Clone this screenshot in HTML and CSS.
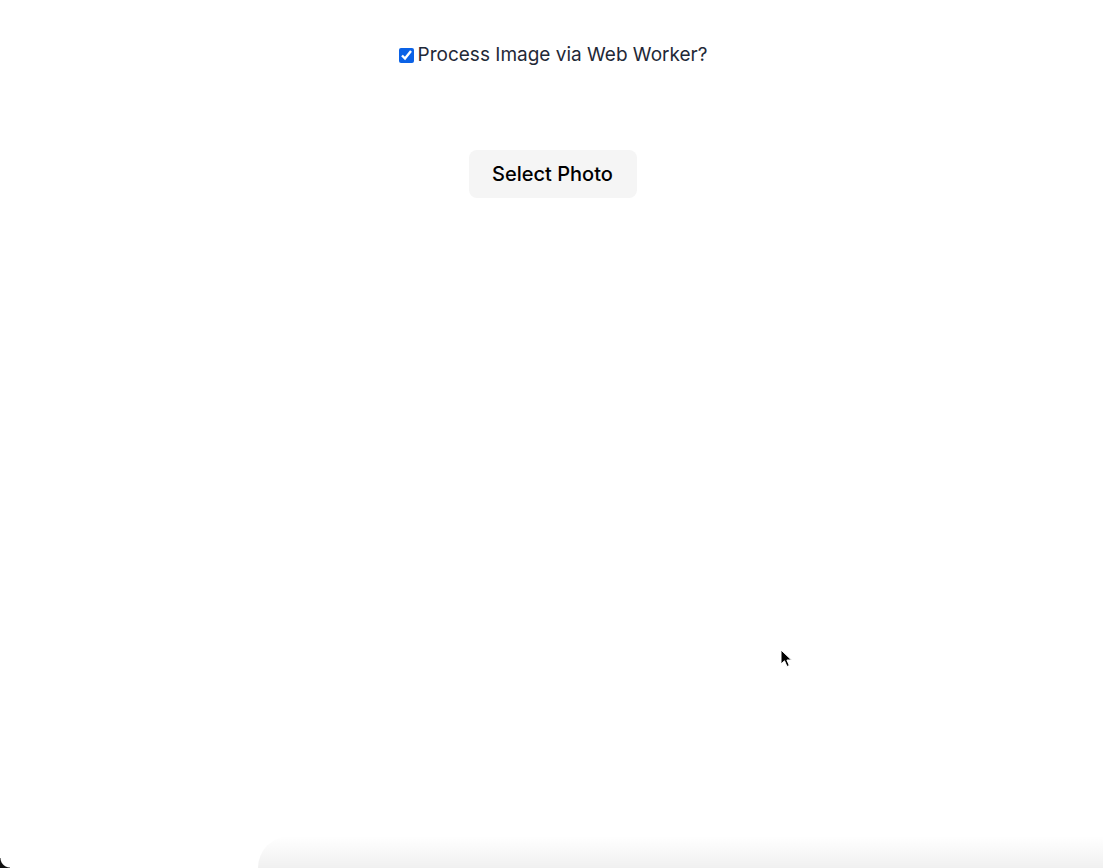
FILE: index.html
```html
<!DOCTYPE html>
<html>
<head>
<meta charset="utf-8">
<link rel="stylesheet" href="styles.css">
</head>
<body>
<main class="app">
  <label class="option">
    <input type="checkbox" class="option-check" checked>
    <span class="option-text">Process Image via Web Worker?</span>
  </label>
  <button class="select-btn" type="button">Select Photo</button>
</main>
<div class="dock-shadow"></div>
<div class="corner"></div>
<svg class="cursor" width="14" height="20" viewBox="0 0 14 20"><path d="M1 1 L1 15 L4.5 11.8 L7 17.5 L9.3 16.5 L6.9 11 L11.5 11 Z" fill="#000" stroke="#fff" stroke-width="1"/></svg>
</body>
</html>
```
FILE: styles.css
```css
html, body {
  margin: 0;
  padding: 0;
  background: #fff;
  height: 100%;
  overflow: hidden;
}
body {
  font-family: Inter, "Noto Sans", sans-serif;
  position: relative;
}
.app {
  display: flex;
  flex-direction: column;
  align-items: center;
  padding-top: 43px;
}
.option {
  display: flex;
  align-items: center;
  gap: 4px;
  color: #1f2937;
  font-size: 19px;
  line-height: 24px;
  margin-left: 3px;
}
.option-check {
  width: 15px;
  height: 15px;
  margin: 0;
  accent-color: #0b62e6;
}
.select-btn {
  margin-top: 83px;
  margin-left: 2px;
  width: 168px;
  height: 48px;
  border: none;
  border-radius: 8px;
  background: #f5f5f5;
  color: #000;
  font-family: Inter, "Noto Sans", sans-serif;
  font-size: 20px;
  font-weight: 500;
  padding: 0;
}
.dock-shadow {
  position: absolute;
  left: 258px;
  right: 0;
  bottom: 0;
  height: 32px;
  border-top-left-radius: 44px;
  background: linear-gradient(to bottom, rgba(0,0,0,0.0), rgba(0,0,0,0.06));
}
.corner {
  position: absolute;
  left: 0;
  bottom: 0;
  width: 10px;
  height: 10px;
  background: radial-gradient(circle at 100% 0, transparent 9px, #111 10px);
}
.cursor {
  position: absolute;
  left: 780px;
  top: 649px;
}
```
